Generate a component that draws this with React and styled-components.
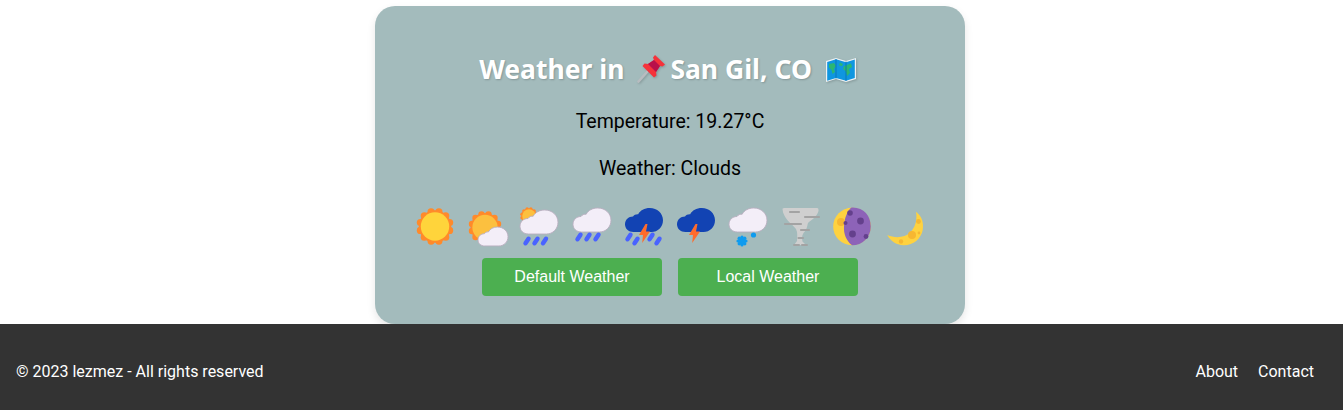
import styled, { createGlobalStyle } from "styled-components";

const GlobalStyle = createGlobalStyle`
  html, body {
    margin: 0;
    padding: 0;
    background: #fff;
    font-family: Roboto, "Noto Sans", sans-serif;
  }
`;

const Page = styled.div`
  display: flex;
  flex-direction: column;
  height: 410px;
  overflow: hidden;
`;

const Main = styled.main`
  display: flex;
  justify-content: center;
  padding: 6px 3px 0 0;
  height: 318px;
`;

const Card = styled.section`
  width: 590px;
  height: 318px;
  box-sizing: border-box;
  padding-top: 42px;
  background: #a3bbbc;
  border-radius: 20px;
  box-shadow: 0 4px 8px rgba(0, 0, 0, 0.1);
  text-align: center;
`;

const Title = styled.h1`
  display: flex;
  justify-content: center;
  align-items: center;
  height: 42px;
  margin: 0 0 18px;
  font-family: "Noto Sans", sans-serif;
  font-size: 26.5px;
  font-weight: 700;
  color: #fff;
  text-shadow: 1px 1px 2px rgba(0, 0, 0, 0.2);
  white-space: pre;
`;

const Emoji = styled.svg`
  flex: none;
  margin: ${(p) => p.$margin};
  filter: drop-shadow(1px 1px 1px rgba(0, 0, 0, 0.18));
`;

const Info = styled.p`
  margin: 0 0 20px;
  height: 27px;
  line-height: 27px;
  font-size: 19.5px;
  color: #000;
`;

const IconRow = styled.div`
  display: flex;
  justify-content: center;
  gap: 14.3px;
  margin-top: 26px;
`;

const Icon = styled.svg`
  display: block;
  width: 38px;
  height: 38px;
  flex: none;
  overflow: visible;
`;

const Buttons = styled.div`
  display: flex;
  justify-content: center;
  gap: 16px;
  margin-top: 12px;
`;

const Button = styled.button`
  width: 180px;
  height: 38px;
  border: 0;
  border-radius: 4px;
  background: #4caf50;
  color: #fff;
  font-family: "Liberation Sans", Arial, sans-serif;
  font-size: 16px;
  cursor: pointer;
`;

const Footer = styled.footer`
  display: flex;
  justify-content: space-between;
  align-items: center;
  height: 86px;
  box-sizing: border-box;
  padding: 8px 29px 0 16px;
  background: #333;
  color: #fff;
  font-size: 16px;
`;

const FooterLinks = styled.nav`
  display: flex;
  gap: 20px;
`;

const FooterLink = styled.a`
  color: #fff;
  text-decoration: none;
  cursor: pointer;
`;

const CLOUD = "#f3eef8";
const CLOUD_EDGE = "#b9aebf";
const NAVY = "#1243b3";
const RAIN = "#4a63ff";

const Sun = ({ cx, cy, r, core = "#ffd43b" }) => {
  const bumps = [];
  for (let i = 0; i < 12; i++) {
    const a = (i * Math.PI) / 6 + Math.PI / 12;
    bumps.push(<circle key={i} cx={cx + Math.cos(a) * r * 0.84} cy={cy + Math.sin(a) * r * 0.84} r={r * 0.2} fill="#ff8a2b" />);
  }
  return (
    <g>
      {bumps}
      <circle cx={cx} cy={cy} r={r * 0.9} fill="#ff8a2b" />
      <circle cx={cx} cy={cy} r={r * 0.79} fill={core} />
    </g>
  );
};

// cloud shape fits a 38x24 box, placed and scaled with a transform
const cloudPath = "M8.5 24C3.5 24 0 20.8 0 16.3 0 11.8 3.5 8.5 8 8.5 9.2 6.8 11 6 13.2 6.2 15.2 2.4 19.5 0 24.8 0 32.2 0 38 5.4 38 12.2 38 19 32.8 24 26.5 24Z";

const Cloud = ({ x, y, scale = 1, fill = CLOUD, edge = CLOUD_EDGE }) => (
  <path d={cloudPath} transform={`translate(${x} ${y}) scale(${scale})`} fill={fill} stroke={edge} strokeWidth={edge === "none" ? 0 : 0.9 / scale} />
);

const Drop = ({ x, y }) => <line x1={x + 1.5} y1={y - 2.3} x2={x - 1.5} y2={y + 2.3} stroke={RAIN} strokeWidth="4.4" strokeLinecap="round" />;

const Bolt = ({ x, y }) => <path transform={`translate(${x} ${y})`} d="M6.5 0 0 11H4L3.2 19 11 7.5H7L8.5 0Z" fill="#ff6b2c" />;

const Snowflake = ({ cx, cy, r }) => {
  const bumps = [];
  for (let i = 0; i < 8; i++) {
    const a = (i * Math.PI) / 4;
    bumps.push(<circle key={i} cx={cx + Math.cos(a) * r * 0.8} cy={cy + Math.sin(a) * r * 0.8} r={r * 0.32} fill="#0f9bef" />);
  }
  return (
    <g>
      {bumps}
      <circle cx={cx} cy={cy} r={r * 0.8} fill="#0f9bef" />
    </g>
  );
};

const WEATHER_ICONS = [
  <>
    <Sun cx={19} cy={18.5} r={18} />
  </>,
  <>
    <Sun cx={17} cy={19.5} r={16} core="#fcc03f" />
    <Cloud x={10} y={19} scale={0.79} />
  </>,
  <>
    <Sun cx={9} cy={8} r={8.6} core="#fcc03f" />
    <Cloud x={0} y={2} />
    <Drop x={7} y={33} />
    <Drop x={16} y={33} />
    <Drop x={24.5} y={33} />
  </>,
  <>
    <Cloud x={0} y={0} />
    <Drop x={6} y={29} />
    <Drop x={15} y={29} />
    <Drop x={24} y={29} />
  </>,
  <>
    <Cloud x={0} y={0} fill={NAVY} edge="none" />
    <Bolt x={14} y={16} />
    <Drop x={4} y={29} />
    <Drop x={11} y={33} />
    <Drop x={26} y={29} />
    <Drop x={33} y={33} />
  </>,
  <>
    <Cloud x={0} y={0} fill={NAVY} edge="none" />
    <Bolt x={12} y={16} />
  </>,
  <>
    <Cloud x={0} y={0} />
    <Snowflake cx={13} cy={33} r={5} />
    <circle cx={24.5} cy={27} r={2.6} fill="#0f9bef" />
  </>,
  <>
    <path
      d="M.5 1C.5 0 2 0 3 0H35C36.5 0 36.5 1 36.5 3 35 9 29 12 26 15 25 18 25 22 21.5 25 19.5 28 20 31 20.5 33.5L24 37H12L15 33C15 29 16 25 14 21 9 15 1 10 .5 1Z"
      fill="#cfcfcf"
    />
    <path d="M8 4H17M23 9H37M3 16H19M19 22H27M16.5 30H21" stroke="#a3a3a3" strokeWidth="2.2" strokeLinecap="round" fill="none" />
    <path d="M12 37H17M20 37H25" stroke="#a3a3a3" strokeWidth="2" strokeLinecap="round" />
  </>,
  <>
    <circle cx={18} cy={18.5} r={18.8} fill="#ffd23f" />
    <path d="M17 -.3C29 -1.3 36.8 7.5 36.8 18.5 36.8 29.5 28 37.5 18 37.3 12 32.5 9.5 25.5 10 18.5 10.5 10.5 12.5 4.5 17 -.3Z" fill="#8d63b8" />
    <circle cx={7} cy={14} r={4} fill="#f7b731" />
    <circle cx={16} cy={5} r={2.8} fill="#64408c" />
    <circle cx={26.5} cy={13} r={3.4} fill="#64408c" />
    <circle cx={18.5} cy={26} r={3.4} fill="#64408c" />
    <circle cx={32} cy={28.5} r={2.4} fill="#64408c" />
    <circle cx={11.5} cy={15} r={2} fill="#64408c" />
  </>,
  <>
    <path d="M30 3.7C35.5 8 38 14 36.7 22 35 31 27 37.5 17.5 37.2 10 36.8 4.5 33 1.3 27 7 29.5 13 29.8 18.5 28 27.5 24.5 32 14 30 3.7Z" fill="#ffd23f" />
    <circle cx={26} cy={27} r={4} fill="#f7b731" />
    <circle cx={32.5} cy={13.5} r={2.4} fill="#f7b731" />
    <circle cx={15} cy={33.5} r={2.2} fill="#f7b731" />
    <circle cx={33} cy={25} r={1.4} fill="#f7b731" />
  </>,
];

const PushPin = () => (
  <Emoji width="28" height="28" viewBox="0 0 28 28" $margin="0 5px 0 13px">
    <path d="M1.5 26.5 10 17" stroke="#b8bcc0" strokeWidth="2.6" strokeLinecap="round" />
    <path d="M18 0 28 9.5 25.5 11.5 23 11 19 17 19.5 20.5 17 22.5 5.5 11 7.5 8.5 11 9 17 5 16 2.5Z" fill="#f5323a" />
    <path d="M11 9 17 5 23 11 19 17Z" fill="#b8104a" />
  </Emoji>
);

const WorldMap = () => (
  <Emoji width="30" height="24" viewBox="0 0 30 24" $margin="2px 5px 0 14px">
    <path d="M0 3 10 0 20 3 30 0V21L20 24 10 21 0 24Z" fill="#eef2f4" />
    <path d="M1.2 4 10 1.3 20 4.2 28.8 1.6V20.1L20 22.8 10 20 1.2 22.7Z" fill="#0f96e0" />
    <path d="M3 6 8 5 10 8 8 11 9 14 6.5 16 5.5 12 3 9.5ZM14 4.5 17 6 16 8 13 7.5ZM18 8 25 5.5 26 9 23 11 24 15 21 18 19.5 13 17 11Z" fill="#2bb673" />
    <path d="M10 1V20.5M20 3.5V23" stroke="#0b6fae" strokeWidth="0.8" />
  </Emoji>
);

export default function App() {
  return (
    <>
      <GlobalStyle />
      <Page>
        <Main>
          <Card>
            <Title>
              Weather in
              <PushPin />
              San Gil, CO
              <WorldMap />
            </Title>
            <Info>Temperature: 19.27°C</Info>
            <Info>Weather: Clouds</Info>
            <IconRow>
              {WEATHER_ICONS.map((glyph, i) => (
                <Icon key={i} viewBox="0 0 38 38">
                  {glyph}
                </Icon>
              ))}
            </IconRow>
            <Buttons>
              <Button>Default Weather</Button>
              <Button>Local Weather</Button>
            </Buttons>
          </Card>
        </Main>
        <Footer>
          <span>© 2023 lezmez - All rights reserved</span>
          <FooterLinks>
            <FooterLink>About</FooterLink>
            <FooterLink>Contact</FooterLink>
          </FooterLinks>
        </Footer>
      </Page>
    </>
  );
}
